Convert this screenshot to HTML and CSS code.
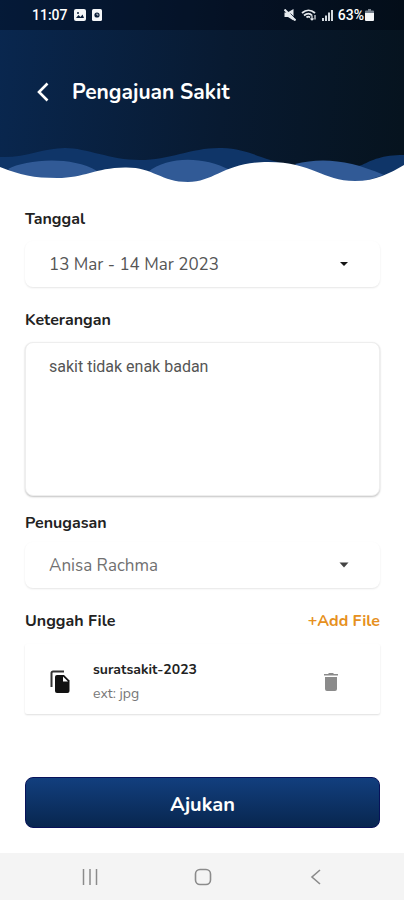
FILE: index.html
```
<!DOCTYPE html>
<html lang="id">
<head>
<meta charset="utf-8">
<meta name="viewport" content="width=device-width, initial-scale=1">
<title>Pengajuan Sakit</title>
<link rel="stylesheet" href="styles.css">
</head>
<body>
<header class="header">
  <div class="status">
    <div class="status-group">
      <span>11:07</span>
      <svg width="12" height="12" viewBox="0 0 12 12"><rect width="12" height="12" rx="2" fill="#f4f6f8"/><path d="M2 9l2.500-3 2 2 2-2.500L10 9z" fill="#0a1d38"/><circle cx="4" cy="4" r="1" fill="#0a1d38"/></svg>
      <svg class="app-icon" width="10" height="12" viewBox="0 0 10 12"><rect width="10" height="12" rx="1.500" fill="#f4f6f8"/><circle cx="5" cy="6" r="2.600" fill="#0a1d38"/><path d="M5 4.500V6h1.500" stroke="#f4f6f8" stroke-width=".8" fill="none"/></svg>
    </div>
    <div class="status-group status-right">
      <svg width="12" height="12" viewBox="0 0 12 12" fill="#e6eaee"><path d="M.5 3.500h3L9.500 0v11.500L4 8H.5z"/><path d="M.5 .5L11.500 11.500" stroke="#e6eaee" stroke-width="2"/><path d="M6.500 4.500L11 9" stroke="#07172c" stroke-width=".8"/></svg>
      <svg class="wifi" width="16" height="12" viewBox="0 0 16 12" fill="none" stroke="#e6eaee" stroke-width="1.800"><path d="M1 4c4-3.600 9-3.600 13 0M3 6.500c3-2.500 6-2.500 8 0M5.500 8.500c1-1 2.500-1 3.500 0"/><path d="M11 11V6.500M9.500 9.500L11 11l1.500-1.500M14 6v4.500" stroke-width="1.200"/></svg>
      <svg width="11" height="12" viewBox="0 0 11 12" fill="#d3d9df"><path d="M0 9h2v3H0zM3 6.500h2V12H3zM6 3.500h2V12H6zM9 1h2v11H9z"/></svg>
      <span class="battery-text">63%</span>
      <svg width="9" height="12" viewBox="0 0 9 12"><path d="M3 0h3v1.500h2a1 1 0 0 1 1 1V4H0V2.500a1 1 0 0 1 1-1h2z" fill="#77818e"/><path d="M0 4h9v7a1 1 0 0 1-1 1H1a1 1 0 0 1-1-1z" fill="#f4f6f8"/></svg>
    </div>
  </div>
  <div class="titlebar">
    <button class="back" type="button" aria-label="Kembali"><svg width="14" height="20" viewBox="0 0 14 20"><path d="M11.500 1.500L3 10l8.500 8.500" fill="none" stroke="#fff" stroke-width="2.600"/></svg></button>
    <h1>Pengajuan Sakit</h1>
  </div>
  <svg class="waves" viewBox="0 145 404 40" preserveAspectRatio="none" aria-hidden="true">
    <path fill="#0f3568" d="M0 157C26 158 43 148 65 148S110 160 140 160 193 147 222 148 262 161 290 164L300 170H345L362 165C372 160 382 155 404 155V185H0Z"/>
    <path fill="#315a96" d="M8 169C25 160 70 155 97 171L80 180H25ZM148 172C168 156 203 156 230 170L202 185H170ZM295 164C322 157 350 160 384 175L355 184H315Z"/>
    <path fill="#fff" d="M0 167C20 175 34 178 57 178C85 178 94 168 125 167.500C153 167 161 182 188 182C215 182 224 162 268 162C313 162 322 181 355 181C376 181 390 173 404 165V186H0Z"/>
  </svg>
</header>
<main>
  <form class="form">
    <label class="label" for="date">Tanggal</label>
    <div class="field">
      <select id="date"><option>13 Mar - 14 Mar 2023</option></select>
      <svg class="caret" width="10" height="6" viewBox="0 0 10 6"><path d="M1 1h8L5 5z" fill="#151515"/></svg>
    </div>
    <label class="label" for="note">Keterangan</label>
    <textarea id="note">sakit tidak enak badan</textarea>
    <label class="label label-tight" for="assignee">Penugasan</label>
    <div class="field field-muted">
      <select id="assignee"><option>Anisa Rachma</option></select>
      <svg class="caret" width="10" height="6" viewBox="0 0 10 6"><path d="M.5 .5h9L5 5.500z" fill="#444"/></svg>
    </div>
    <div class="upload-head"><h2>Unggah File</h2><button class="add" type="button">+Add File</button></div>
    <div class="file">
      <svg class="copy" width="20" height="24" viewBox="0 0 20 24"><path d="M14 1.500H3A1.500 1.500 0 0 0 1.500 3v14" fill="none" stroke="#333" stroke-width="2"/><path d="M7 5h7l5.500 5.500V21a2 2 0 0 1-2 2H7a2 2 0 0 1-2-2V7a2 2 0 0 1 2-2z" fill="#111"/><path d="M13 6.500v5h5z" fill="#fff"/></svg>
      <div class="file-text"><strong>suratsakit-2023</strong><span>ext: jpg</span></div>
      <button class="delete" type="button" aria-label="Hapus"><svg width="14" height="18" viewBox="0 0 14 18" fill="#8b8b8b"><path d="M0 1h4l1-1h4l1 1h4v1.500H0zM1 4h12v12a2 2 0 0 1-2 2H3a2 2 0 0 1-2-2z"/></svg></button>
    </div>
    <button class="submit" type="button">Ajukan</button>
  </form>
</main>
<nav class="nav">
  <button type="button" aria-label="Aplikasi terkini"><svg width="16" height="16" viewBox="0 0 16 16"><path d="M1.500 0v16M8 0v16M14.500 0v16" stroke="#8b8b8b" stroke-width="1.500"/></svg></button>
  <button type="button" aria-label="Beranda"><svg width="18" height="18" viewBox="0 0 18 18"><rect x="1.500" y="1.500" width="15" height="15" rx="4.500" fill="none" stroke="#8b8b8b" stroke-width="1.600"/></svg></button>
  <button type="button" aria-label="Kembali ke layar sebelumnya"><svg width="16" height="16" viewBox="0 0 16 16"><path d="M12 1L4 8l8 7" fill="none" stroke="#8b8b8b" stroke-width="1.600"/></svg></button>
</nav>
</body>
</html>
```
FILE: styles.css
```
* { box-sizing: border-box; }
body {
  margin: 0;
  min-height: 100vh;
  display: flex;
  flex-direction: column;
  background: #fff;
  color: #222;
  font-family: Nunito, "Open Sans", sans-serif;
  font-size: 16px;
}
button { border: 0; padding: 0; background: none; font: inherit; color: inherit; cursor: pointer; }
svg { display: block; flex: none; }
h1, h2 { margin: 0; }

.header { background: linear-gradient(95deg, #09274f, #081a31 55%, #06131e); color: #fff; }
.status {
  height: 30px;
  padding: 0 30px 0 32px;
  display: flex;
  align-items: center;
  justify-content: space-between;
  background: rgba(0, 4, 14, .35);
  font: 500 14px/16px Roboto, sans-serif;
}
.status-group { display: flex; align-items: center; gap: 6px; }
.status-right { gap: 5px; }
.battery-text + svg { margin-left: -4px; }

.titlebar { display: flex; align-items: flex-start; gap: 22px; height: 115px; padding: 48px 36px 0; }
.back { height: 28px; }
h1 { font-size: 21px; line-height: 28px; font-weight: 700; }
.waves { width: 100%; height: 40px; }

main { flex: 1; padding: 24px 24px 24px 25px; }
.form { display: flex; flex-direction: column; }
.label, h2 { font-size: 16px; line-height: 20px; font-weight: 700; }
.label { margin-bottom: 12px; }
.field {
  display: flex;
  align-items: center;
  height: 46px;
  margin-bottom: 23px;
  border-radius: 8px;
  box-shadow: 0 1px 2px rgba(0, 0, 0, .1);
  position: relative;
}
select {
  appearance: none;
  width: 100%;
  height: 100%;
  padding: 1px 56px 0 24px;
  border: 0;
  background: transparent;
  color: #555;
  font: 17px/24px Nunito, "Open Sans", sans-serif;
}
.field-muted select { color: #707070; }
.caret { position: absolute; right: 31px; pointer-events: none; }
textarea {
  height: 154px;
  margin-bottom: 17px;
  padding: 12px 23px;
  resize: none;
  border: 1px solid #eee;
  border-radius: 8px;
  box-shadow: 0 1px 2px rgba(0, 0, 0, .24);
  color: #555;
  font: 16px/24px Roboto, sans-serif;
}
.label-tight { margin-bottom: 9px; }

.upload-head { display: flex; justify-content: space-between; align-items: center; margin-bottom: 13px; }
.add { color: #e69020; font-size: 16px; line-height: 20px; font-weight: 700; }
.file {
  display: flex;
  align-items: center;
  height: 70px;
  padding: 5px 42px 0 25px;
  border-radius: 2px;
  box-shadow: 0 1px 2px rgba(0, 0, 0, .13);
}
.file-text { flex: 1; display: flex; flex-direction: column; margin-left: 23px; }
.file-text strong { font-size: 14px; line-height: 24px; font-weight: 700; }
.file-text span { font-size: 14px; line-height: 24px; color: #777; }

.submit {
  height: 51px;
  margin-top: 63px;
  padding-top: 3px;
  border: 1px solid #08125a;
  border-radius: 8px;
  background: linear-gradient(#123f7e, #08264f);
  color: #fff;
  font-size: 20px;
  font-weight: 700;
}
.nav {
  height: 47px;
  padding: 0 32px 0 34px;
  display: grid;
  grid-template-columns: repeat(3, 1fr);
  background: #f4f4f4;
}
.nav button { display: grid; place-items: center; }
```
